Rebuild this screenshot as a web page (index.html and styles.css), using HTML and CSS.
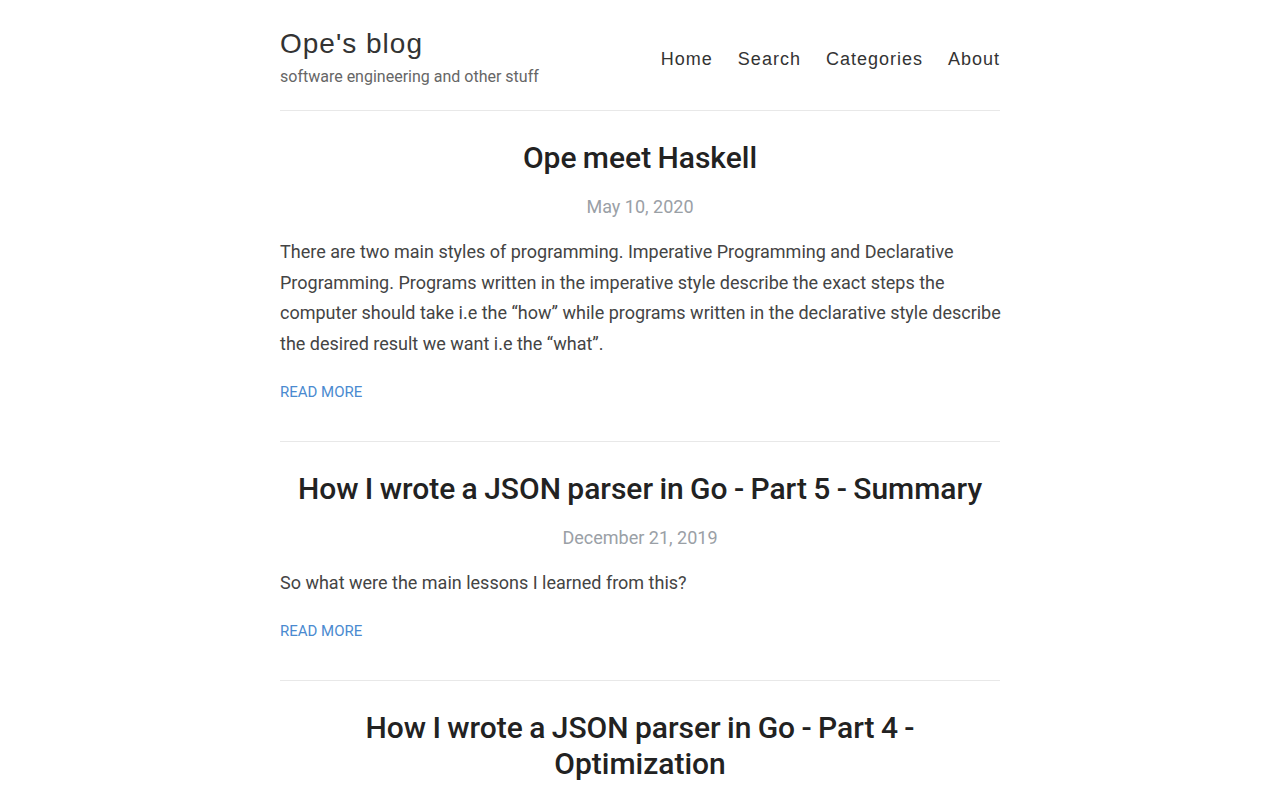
FILE: index.html
```html
<!DOCTYPE html>
<html lang="en">
<head>
    <meta charset="UTF-8">
    <meta name="viewport" content="width=device-width, initial-scale=1.0">
    <title>Ope's blog</title>
    <link rel="stylesheet" href="styles.css">
</head>
<body>
    <div class="container">
        <header class="site-header">
            <div class="brand">
                <a class="site-title" href="#">Ope's blog</a>
                <div class="site-tagline">software engineering and other stuff</div>
            </div>
            <nav class="site-nav">
                <a href="#">Home</a>
                <a href="#">Search</a>
                <a href="#">Categories</a>
                <a href="#">About</a>
            </nav>
        </header>

        <article class="post">
            <h2 class="post-title">Ope meet Haskell</h2>
            <div class="post-date">May 10, 2020</div>
            <p class="post-summary">There are two main styles of programming. Imperative Programming and Declarative Programming. Programs written in the imperative style describe the exact steps the computer should take i.e the “how” while programs written in the declarative style describe the desired result we want i.e the “what”.</p>
            <a class="read-more" href="#">Read more</a>
        </article>

        <article class="post">
            <h2 class="post-title">How I wrote a JSON parser in Go - Part 5 - Summary</h2>
            <div class="post-date">December 21, 2019</div>
            <p class="post-summary">So what were the main lessons I learned from this?</p>
            <a class="read-more" href="#">Read more</a>
        </article>

        <article class="post">
            <h2 class="post-title">How I wrote a JSON parser in Go - Part 4 - Optimization</h2>
            <div class="post-date">December 14, 2019</div>
            <p class="post-summary">Now that the parser works, let's make it faster.</p>
            <a class="read-more" href="#">Read more</a>
        </article>
    </div>
</body>
</html>
```

FILE: styles.css
```css
body {
    margin: 0;
    padding: 0;
    background: #fff;
    font-family: 'Roboto', 'Liberation Sans', sans-serif;
    color: #333;
}
a {
    text-decoration: none;
}
.container {
    width: 720px;
    margin: 0 auto;
}
.site-header {
    display: flex;
    justify-content: space-between;
    align-items: center;
    padding: 27px 0 22px;
    border-bottom: 1px solid #e8e8e8;
}
.site-title {
    display: block;
    font-family: 'Liberation Sans', Arial, sans-serif;
    font-size: 28px;
    letter-spacing: 1px;
    color: #333;
    line-height: 34px;
}
.site-tagline {
    font-size: 16px;
    color: #666;
    margin-top: 5px;
    line-height: 22px;
}
.site-nav {
    display: flex;
    gap: 25px;
    padding-top: 4px;
}
.site-nav a {
    font-family: 'Liberation Sans', Arial, sans-serif;
    font-size: 18px;
    letter-spacing: 1px;
    color: #333;
}
.post {
    padding: 29px 0 39px;
    border-bottom: 1px solid #e8e8e8;
}
.post-title {
    margin: 0;
    text-align: center;
    font-size: 30px;
    font-weight: 500;
    line-height: 36px;
    word-spacing: -1.1px;
    color: #222;
}
.post-date {
    text-align: center;
    font-size: 18px;
    color: #9aa0a6;
    margin-top: 19px;
    line-height: 24px;
}
.post-summary {
    margin: 18px -6px 0 0;
    font-size: 18px;
    line-height: 30.7px;
    color: #444;
}
.read-more {
    display: inline-block;
    margin-top: 22px;
    font-size: 15px;
    text-transform: uppercase;
    color: #4a8ad0;
    line-height: 20px;
}
```
